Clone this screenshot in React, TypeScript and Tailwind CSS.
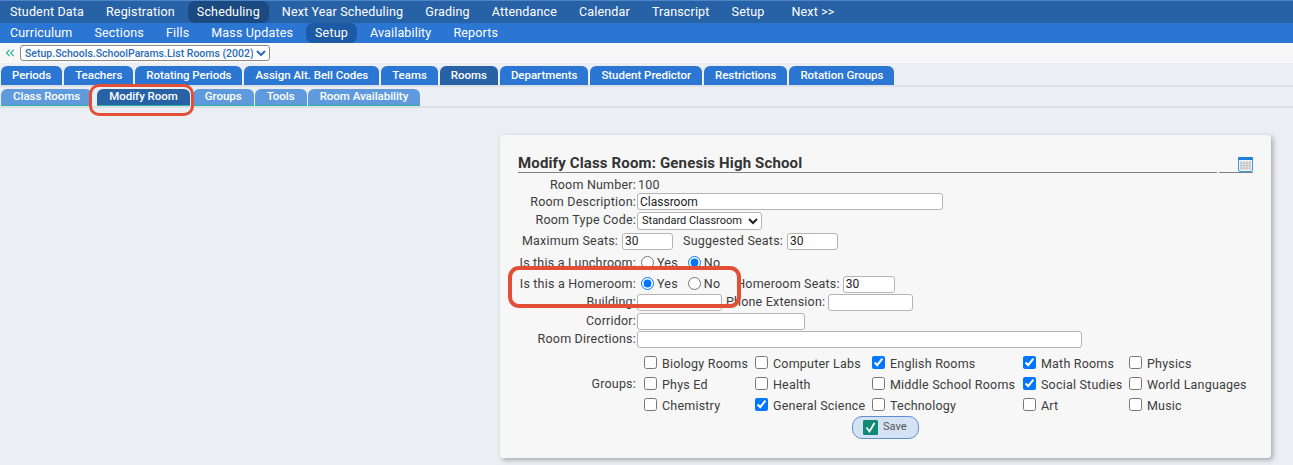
import React from 'react';
import { ChevronsLeft } from 'lucide-react';

const topNav = ['Student Data', 'Registration', 'Scheduling', 'Next Year Scheduling', 'Grading', 'Attendance', 'Calendar', 'Transcript', 'Setup', 'Next >>'];
const subNav = ['Curriculum', 'Sections', 'Fills', 'Mass Updates', 'Setup', 'Availability', 'Reports'];
const tabs = ['Periods', 'Teachers', 'Rotating Periods', 'Assign Alt. Bell Codes', 'Teams', 'Rooms', 'Departments', 'Student Predictor', 'Restrictions', 'Rotation Groups'];
const subTabs = ['Class Rooms', 'Modify Room', 'Groups', 'Tools', 'Room Availability'];

const groups: [string, boolean][] = [
    ['Biology Rooms', false], ['Computer Labs', false], ['English Rooms', true], ['Math Rooms', true], ['Physics', false],
    ['Phys Ed', false], ['Health', false], ['Middle School Rooms', false], ['Social Studies', true], ['World Languages', false],
    ['Chemistry', false], ['General Science', true], ['Technology', false], ['Art', false], ['Music', false],
];

const inputCls = 'h-[17px] rounded-[3px] border border-[#b4b4b4] bg-white px-[2px] text-[12px] tracking-normal text-[#222] outline-none';

const Label: React.FC<{ children: React.ReactNode; className?: string }> = ({ children, className }) => (
    <span className={`whitespace-nowrap ${className ?? ''}`}>{children}</span>
);

const Row: React.FC<{ label: string; className: string; labelClass?: string; children?: React.ReactNode }> = ({ label, className, labelClass, children }) => (
    <div className={`flex items-center ${className}`}>
        <span className={`w-[118px] shrink-0 whitespace-nowrap text-right ${labelClass ?? ''}`}>{label}</span>
        <div className="ml-px flex items-center">{children}</div>
    </div>
);

const YesNo: React.FC<{ name: string; yes: boolean }> = ({ name, yes }) => (
    <div className="ml-[4px] flex items-center">
        <input type="radio" name={name} defaultChecked={yes} className="m-0 mb-[2px] h-[13px] w-[13px]" />
        <span className="ml-[3px]">Yes</span>
        <input type="radio" name={name} defaultChecked={!yes} className="m-0 mb-[2px] ml-[10px] h-[13px] w-[13px]" />
        <span className="ml-[3px]">No</span>
    </div>
);

export default function App() {
    return (
        <div className="relative h-[465px] w-[1293px] overflow-hidden bg-[#ebeef3] font-['Roboto',sans-serif] text-[12.5px] tracking-[0.2px] text-[#3c3c3c]">
            {/* Menus */}
            <nav className="flex h-[23px] items-center gap-[4px] border-t border-[#4d86c8] bg-[#2862a6] pl-px text-[12.5px] tracking-[0.16px] text-white">
                {topNav.map(item => (
                    <span key={item} className={`rounded-[7px] px-[9px] py-[2px] ${item === 'Scheduling' ? 'bg-[#1b4a80]' : ''} ${item === 'Next >>' ? 'ml-[5px]' : ''}`}>{item}</span>
                ))}
            </nav>
            <nav className="flex h-[20px] items-center gap-[4px] bg-[#2b76d3] pl-px text-[12.5px] tracking-[0.16px] text-white">
                {subNav.map(item => (
                    <span key={item} className={`rounded-[7px] px-[9px] py-[1px] ${item === 'Setup' ? 'bg-[#1d5aa6]' : ''}`}>{item}</span>
                ))}
            </nav>
            <div className="flex h-[20px] items-center bg-[#f7f7f7] pl-[3px]">
                <ChevronsLeft size={14} strokeWidth={2} className="text-[#2bb5a0]" />
                <select className="ml-[3px] h-[16px] w-[250px] rounded-[3px] border border-[#8a8a8a] bg-white text-[10.5px] font-medium tracking-normal text-[#2a6bb8]">
                    <option>Setup.Schools.SchoolParams.List Rooms (2002)</option>
                </select>
            </div>

            {/* Tabs */}
            <div className="mt-[3px] flex h-[21px] gap-[2px] border-b-2 border-[#dcdfe4] pl-px tracking-[-0.03px]">
                {tabs.map(tab => (
                    <span
                        key={tab}
                        className={`flex h-[19px] items-center rounded-t-[6px] px-[11px] text-[11.5px] font-medium text-white ${tab === 'Rooms' ? 'bg-[#2862a6]' : 'bg-[#2b76d3]'}`}
                    >
                        {tab}
                    </span>
                ))}
            </div>
            <div className="mt-[2px] flex h-[19px] border-b-2 border-[#dcdfe4] pl-px tracking-[-0.03px]">
                {subTabs.map(tab => (
                    <span
                        key={tab}
                        className={`flex h-[17px] items-center rounded-t-[6px] border-b border-[#2bb5a0] px-[12px] text-[11.5px] font-medium text-white ${tab === 'Modify Room' ? 'ml-[4px] mr-[3px] bg-[#2862a6]' : 'mr-px bg-[#5f9bdc]'}`}
                    >
                        {tab}
                    </span>
                ))}
            </div>

            {/* Panel */}
            <div className="ml-[500px] mt-[27px] h-[323px] w-[771px] rounded-[3px] bg-[#f7f7f7] px-[18px] pt-[18px] shadow-[2px_2px_5px_rgba(0,0,0,0.3)]">
                <div className="flex h-[20px] gap-[2px]">
                    <div className="w-[699px] border-b border-[#808080] text-[15px] font-bold leading-[20px] tracking-[0.15px] text-[#333]">
                        Modify Class Room: Genesis High School
                    </div>
                    <div className="flex w-[34px] items-end justify-end border-b border-[#808080]">
                        <svg width="15" height="15" viewBox="0 0 15 15">
                            <rect x="0.5" y="0.5" width="14" height="14" rx="1.5" fill="#f2f2f2" stroke="#3a9ae0" />
                            <rect x="0" y="0" width="15" height="3" rx="1" fill="#1d7fd6" />
                            <path d="M3 4v9M6 4v9M9 4v9M12 4v9M2 6h11M2 8.5h11M2 11h11" stroke="#b5b5b5" strokeWidth="0.8" fill="none" />
                        </svg>
                    </div>
                </div>

                <Row label="Room Number:" className="mt-[4px] h-[16px]">
                    <span className="ml-px">100</span>
                </Row>
                <Row label="Room Description:" labelClass="pt-px" className="h-[17px]">
                    <input defaultValue="Classroom" className={`${inputCls} w-[306px]`} />
                </Row>
                <Row label="Room Type Code:" className="mt-[1px] h-[19px]">
                    <select className="h-[18px] w-[125px] rounded-[3px] border border-[#b4b4b4] bg-white text-[11px] tracking-normal text-[#222]">
                        <option>Standard Classroom</option>
                    </select>
                </Row>
                <div className="mt-[2px] flex h-[18px] items-center">
                    <Label className="ml-[4px]">Maximum Seats:</Label>
                    <input defaultValue="30" className={`${inputCls} ml-[4px] w-[51px]`} />
                    <Label className="ml-[10px]">Suggested Seats:</Label>
                    <input defaultValue="30" className={`${inputCls} ml-[4px] w-[51px]`} />
                </div>
                <Row label="Is this a Lunchroom:" className="mt-[5px] h-[17px]">
                    <YesNo name="lunch" yes={false} />
                </Row>
                <Row label="Is this a Homeroom:" className="mt-[3px] h-[18px]">
                    <YesNo name="home" yes={true} />
                    <Label className="ml-[16px]">Homeroom Seats:</Label>
                    <input defaultValue="30" className={`${inputCls} ml-[3px] w-[52px]`} />
                </Row>
                <Row label="Building:" className="h-[18px]">
                    <input className={`${inputCls} w-[85px]`} />
                    <Label className="ml-[4px]">Phone Extension:</Label>
                    <input className={`${inputCls} ml-[3px] w-[85px]`} />
                </Row>
                <Row label="Corridor:" className="mt-px h-[18px]">
                    <input className={`${inputCls} w-[168px]`} />
                </Row>
                <Row label="Room Directions:" className="h-[18px]">
                    <input className={`${inputCls} w-[445px]`} />
                </Row>

                <div className="mt-[5px] flex items-center">
                    <span className="w-[118px] shrink-0 text-right">Groups:</span>
                    <div className="ml-[8px] grid grid-cols-[111px_117px_151px_106px_1fr] auto-rows-[21px] items-center">
                        {groups.map(([name, checked]) => (
                            <label key={name} className="flex items-center whitespace-nowrap">
                                <input type="checkbox" defaultChecked={checked} className="m-0 mb-[2px] h-[13px] w-[13px]" />
                                <span className="ml-[5px] pt-[2px]">{name}</span>
                            </label>
                        ))}
                    </div>
                </div>

                <div className="ml-[334px] flex h-[23px] w-[67px] items-center rounded-[10px] border border-[#5b8fd0] bg-[#d5e2f3] pl-[10px] text-[11px] tracking-normal text-[#555]">
                    <svg width="15" height="15" viewBox="0 0 15 15">
                        <rect width="15" height="15" rx="1.5" fill="#0f8a76" />
                        <path d="M3.5 7.5l3 4 5-8.5" stroke="#fff" strokeWidth="1.8" fill="none" />
                    </svg>
                    <span className="ml-[5px]">Save</span>
                </div>
            </div>

            {/* Red annotations */}
            <div className="absolute left-[89px] top-[84px] h-[32px] w-[105px] rounded-[10px] border-[3px] border-[#e24e36]" />
            <div className="absolute left-[508px] top-[266px] h-[42px] w-[233px] rounded-[11px] border-[4px] border-[#e24e36]" />
        </div>
    );
}
